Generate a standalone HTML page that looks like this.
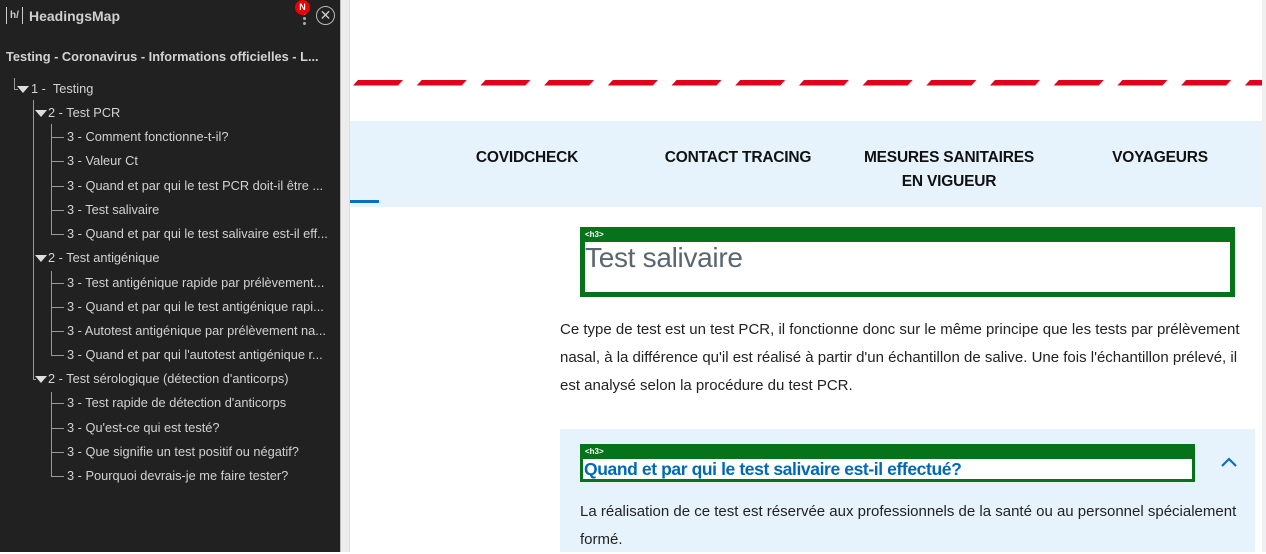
<!DOCTYPE html>
<html><head><meta charset="utf-8"><style>
*{margin:0;padding:0;box-sizing:border-box}
body{width:1266px;height:552px;overflow:hidden;background:#fff;position:relative;font-family:"Liberation Sans",sans-serif}
#sb{position:absolute;left:0;top:0;width:340px;height:552px;background:#212121;color:#d0d0d0}
#strip{position:absolute;left:340px;top:0;width:10px;height:552px;background:#ececec;border-left:1px solid #bbb;border-right:1px solid #ddd}
.r{position:absolute;font-size:12.8px;white-space:nowrap;line-height:14px;color:#d2d2d2}
.vl{position:absolute;width:1px;background:#999}
.hl{position:absolute;height:1px;background:#999}
.tri{position:absolute;width:0;height:0;border-left:6px solid transparent;border-right:6px solid transparent;border-top:7px solid #ddd}
.nav{position:absolute;font-weight:bold;font-size:15.5px;color:#111;text-align:center;line-height:24px;letter-spacing:-0.2px}
p.t{position:absolute;font-size:15px;line-height:28px;color:#222}
</style></head><body>
<div id="sb">
 <div style="position:absolute;left:6px;top:7px;width:17px;height:17px;border-left:1.5px solid #ccc;border-right:1.5px solid #ccc;font-size:10px;font-weight:bold;color:#ccc;text-align:center;line-height:17px">h/</div>
 <div class="r" style="left:29px;top:9px;font-size:14px;font-weight:bold;color:#cfcfcf">HeadingsMap</div>
 <div style="position:absolute;left:303px;top:12px;width:3px;height:3px;background:#aaa;border-radius:50%;box-shadow:0 5px 0 #aaa,0 10px 0 #aaa"></div>
 <div style="position:absolute;left:295px;top:0;width:15px;height:15px;background:#e00;border-radius:50%;color:#fff;font-size:9px;font-weight:bold;text-align:center;line-height:15px">N</div>
 <div style="position:absolute;left:316px;top:6px;width:19px;height:19px;border:1.5px solid #bbb;border-radius:50%;color:#ccc;font-size:14px;text-align:center;line-height:16px">✕</div>
 <div class="r" style="left:6px;top:50px;font-weight:bold;font-size:12.8px">Testing - Coronavirus - Informations officielles - L...</div>
 <div class="vl" style="left:14px;top:78px;height:12px"></div><div class="hl" style="left:14px;top:89px;width:4px"></div>
 <div class="tri" style="left:17px;top:86px"></div><div class="r" style="left:31px;top:82px">1 -&nbsp; Testing</div>
 <div class="vl" style="left:33px;top:100px;height:280px"></div>
 <div class="tri" style="left:35px;top:110px"></div><div class="r" style="left:48px;top:106px">2 - Test PCR</div>
 <div class="tri" style="left:35px;top:255px"></div><div class="r" style="left:48px;top:251px">2 - Test antigénique</div>
 <div class="hl" style="left:33px;top:379px;width:3px"></div>
 <div class="tri" style="left:35px;top:376px"></div><div class="r" style="left:48px;top:372px">2 - Test sérologique (détection d'anticorps)</div>
 <div class="vl" style="left:51px;top:124px;height:111px"></div>
 <div class="vl" style="left:51px;top:271px;height:85px"></div>
 <div class="vl" style="left:51px;top:392px;height:85px"></div>
 <div class="hl" style="left:51px;top:137px;width:13px"></div><div class="r" style="left:67px;top:130px">3 - Comment fonctionne-t-il?</div>
 <div class="hl" style="left:51px;top:161px;width:13px"></div><div class="r" style="left:67px;top:154px">3 - Valeur Ct</div>
 <div class="hl" style="left:51px;top:186px;width:13px"></div><div class="r" style="left:67px;top:179px">3 - Quand et par qui le test PCR doit-il être ...</div>
 <div class="hl" style="left:51px;top:210px;width:13px"></div><div class="r" style="left:67px;top:203px">3 - Test salivaire</div>
 <div class="hl" style="left:51px;top:234px;width:13px"></div><div class="r" style="left:67px;top:227px">3 - Quand et par qui le test salivaire est-il eff...</div>
 <div class="hl" style="left:51px;top:283px;width:13px"></div><div class="r" style="left:67px;top:276px">3 - Test antigénique rapide par prélèvement...</div>
 <div class="hl" style="left:51px;top:307px;width:13px"></div><div class="r" style="left:67px;top:300px">3 - Quand et par qui le test antigénique rapi...</div>
 <div class="hl" style="left:51px;top:331px;width:13px"></div><div class="r" style="left:67px;top:324px">3 - Autotest antigénique par prélèvement na...</div>
 <div class="hl" style="left:51px;top:355px;width:13px"></div><div class="r" style="left:67px;top:348px">3 - Quand et par qui l'autotest antigénique r...</div>
 <div class="hl" style="left:51px;top:403px;width:13px"></div><div class="r" style="left:67px;top:396px">3 - Test rapide de détection d'anticorps</div>
 <div class="hl" style="left:51px;top:428px;width:13px"></div><div class="r" style="left:67px;top:421px">3 - Qu'est-ce qui est testé?</div>
 <div class="hl" style="left:51px;top:452px;width:13px"></div><div class="r" style="left:67px;top:445px">3 - Que signifie un test positif ou négatif?</div>
 <div class="hl" style="left:51px;top:476px;width:13px"></div><div class="r" style="left:67px;top:469px">3 - Pourquoi devrais-je me faire tester?</div>
</div>
<div id="strip"></div>
<svg style="position:absolute;left:350px;top:80px" width="916" height="6"><defs><pattern id="p" x="3" y="0" width="63.7" height="6" patternUnits="userSpaceOnUse"><polygon points="0,5.5 5,0 50,0 45,5.5" fill="#e2001a"/></pattern></defs><rect width="916" height="6" fill="url(#p)"/></svg>
<div style="position:absolute;left:350px;top:121px;width:916px;height:86px;background:#e7f3fc"></div>
<div style="position:absolute;left:350px;top:200px;width:29px;height:3px;background:#0a6fc2"></div>
<div class="nav" style="left:457px;top:146px;width:140px">COVIDCHECK</div>
<div class="nav" style="left:648px;top:146px;width:180px">CONTACT TRACING</div>
<div class="nav" style="left:849px;top:146px;width:200px">MESURES SANITAIRES<br>EN VIGUEUR</div>
<div class="nav" style="left:1090px;top:146px;width:140px">VOYAGEURS</div>
<div style="position:absolute;left:580px;top:227px;width:655px;height:70px;background:#06731a"></div>
<div style="position:absolute;left:585px;top:242px;width:645px;height:50px;background:#fff"></div>
<div style="position:absolute;left:585px;top:230px;font-size:8px;font-weight:bold;color:#fff;line-height:10px">&lt;h3&gt;</div>
<div style="position:absolute;left:585px;top:241px;font-size:28px;color:#5a6670;line-height:34px;letter-spacing:-0.3px">Test salivaire</div>
<p class="t" style="left:560px;top:316px;width:686px">Ce type de test est un test PCR, il fonctionne donc sur le même principe que les tests par prélèvement nasal, à la différence qu'il est réalisé à partir d'un échantillon de salive. Une fois l'échantillon prélevé, il est analysé selon la procédure du test PCR.</p>
<div style="position:absolute;left:560px;top:429px;width:695px;height:123px;background:#e7f3fc"></div>
<div style="position:absolute;left:580px;top:444px;width:615px;height:38px;background:#06731a"></div>
<div style="position:absolute;left:583px;top:459px;width:609px;height:20px;background:#fff"></div>
<div style="position:absolute;left:585px;top:447px;font-size:8px;font-weight:bold;color:#fff;line-height:10px">&lt;h3&gt;</div>
<div style="position:absolute;left:584px;top:458px;font-size:17.5px;font-weight:bold;color:#0068b8;line-height:22px;letter-spacing:-0.4px">Quand et par qui le test salivaire est-il effectué?</div>
<svg style="position:absolute;left:1220px;top:456px" width="18" height="12"><path d="M2 10 L9 3 L16 10" stroke="#0a6fc2" stroke-width="2.2" fill="none"/></svg>
<p class="t" style="left:580px;top:498px;width:670px">La réalisation de ce test est réservée aux professionnels de la santé ou au personnel spécialement formé.</p>
<div style="position:absolute;left:1262px;top:0;width:4px;height:552px;background:#f0f0f0"></div>
</body></html>
